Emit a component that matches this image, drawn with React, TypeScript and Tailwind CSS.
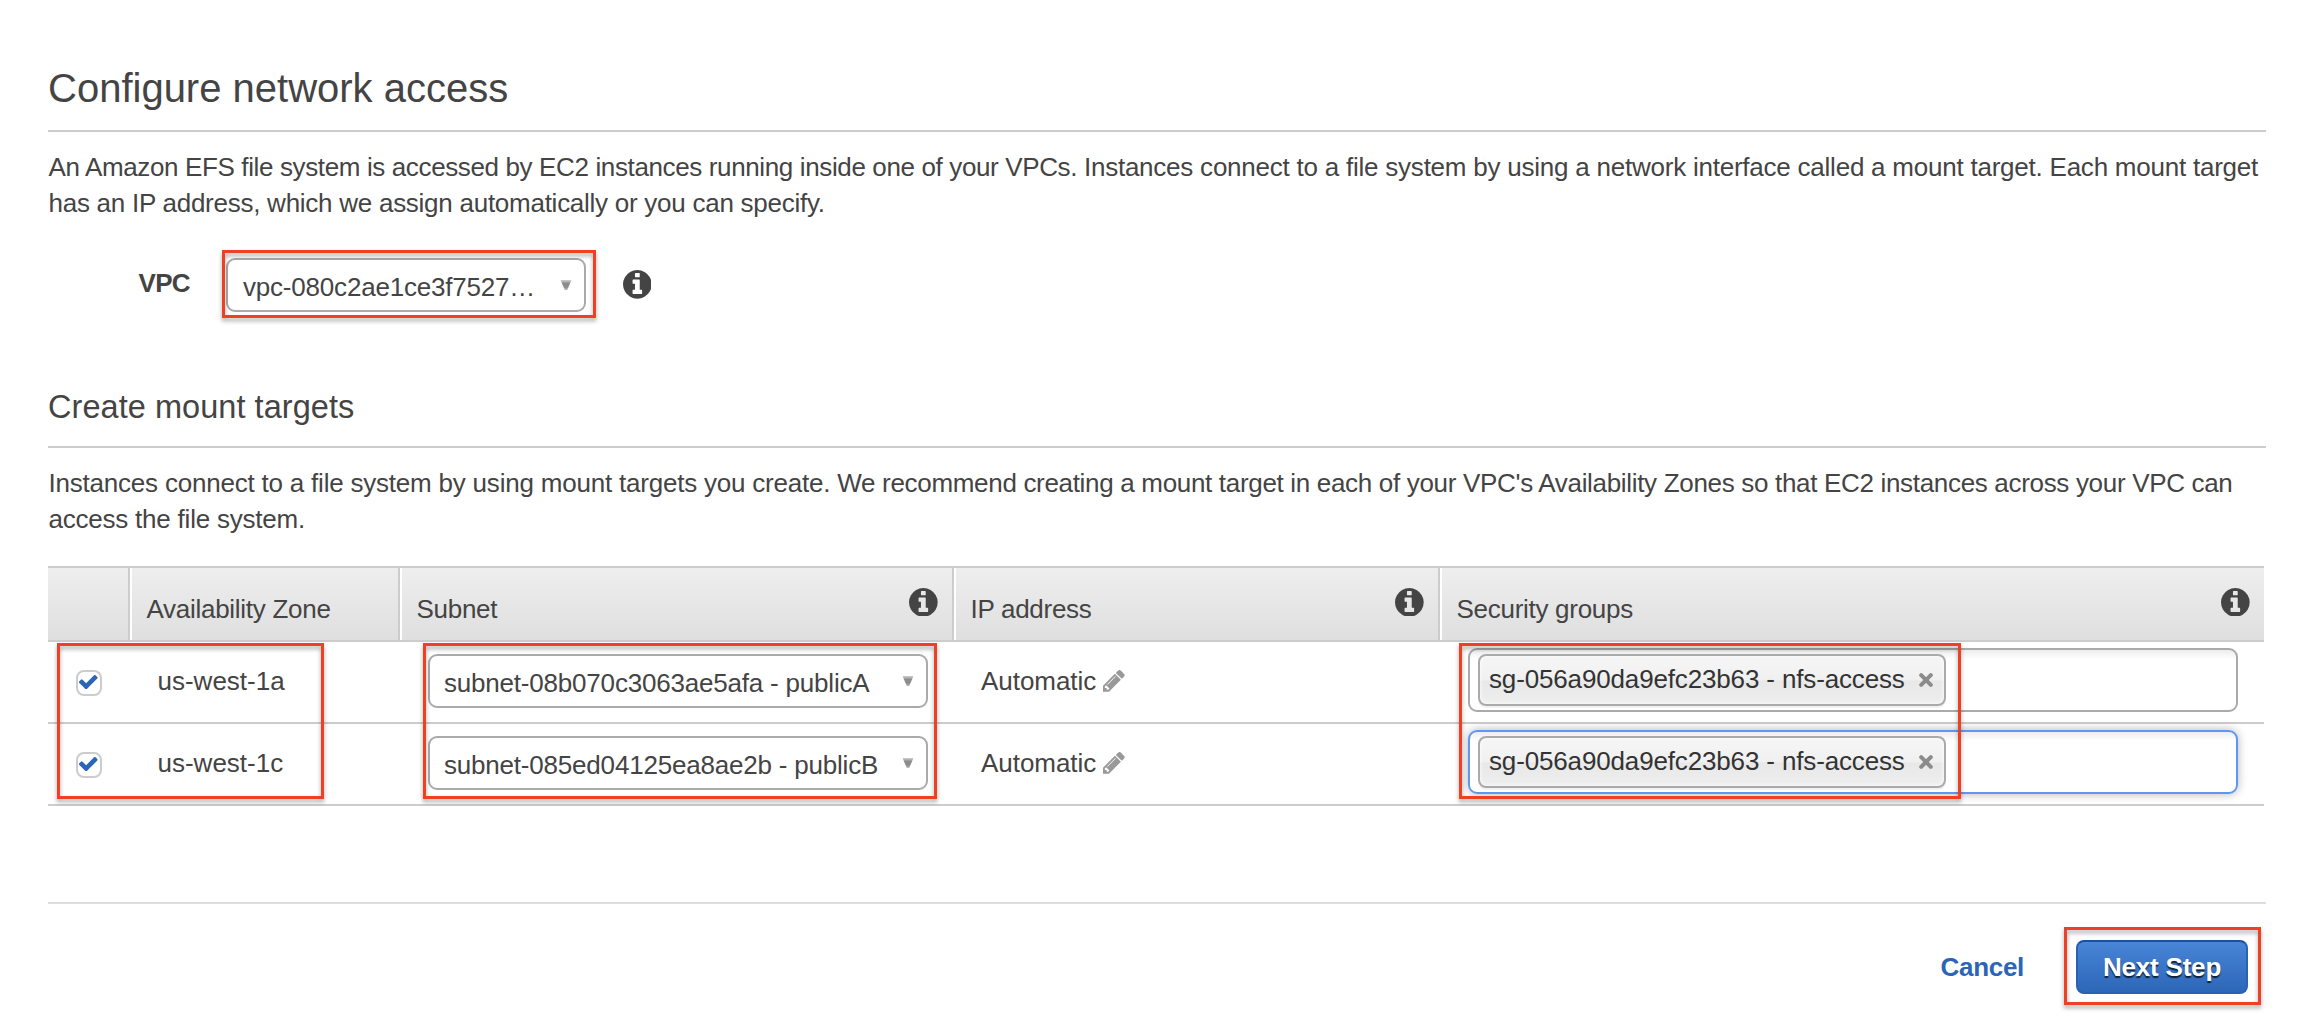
import type { ReactNode } from "react";

const rows = [
  { zone: "us-west-1a", subnet: "subnet-08b070c3063ae5afa - publicA", group: "sg-056a90da9efc23b63 - nfs-access", focused: false },
  { zone: "us-west-1c", subnet: "subnet-085ed04125ea8ae2b - publicB", group: "sg-056a90da9efc23b63 - nfs-access", focused: true },
];

function InfoIcon({ className = "" }: { className?: string }) {
  return (
    <svg viewBox="128 128 1536 1536" className={`size-[28.7px] shrink-0 fill-[#444] ${className}`}>
      <path d="M1152 1376v-160q0 -14 -9 -23t-23 -9h-96v-512q0 -14 -9 -23t-23 -9h-320q-14 0 -23 9t-9 23v160q0 14 9 23t23 9h96v320h-96q-14 0 -23 9t-9 23v160q0 14 9 23t23 9h448q14 0 23 -9t9 -23zM1024 480v-160q0 -14 -9 -23t-23 -9h-192q-14 0 -23 9t-9 23v160q0 14 9 23t23 9h192q14 0 23 -9t9 -23zM1664 896q0 209 -103 385.5t-279.5 279.5t-385.5 103t-385.5 -103t-279.5 -279.5t-103 -385.5t103 -385.5t279.5 -279.5t385.5 -103t385.5 103t279.5 279.5t103 385.5z" />
    </svg>
  );
}

function PencilIcon() {
  return (
    <svg viewBox="128 149 1515 1515" className="ml-[7px] mt-[7px] size-[21.7px] shrink-0 fill-[#999]">
      <path d="M491 1536l91-91-235-235-91 91v107h128v128h107zm523-928q0-22-22-22-10 0-17 7l-542 542q-7 7-7 17 0 22 22 22 10 0 17-7l542-542q7-7 7-17zm-54-192l416 416-832 832h-416v-416zm683 96q0 53-37 90l-166 166-416-416 166-165q36-38 90-38 53 0 91 38l235 234q37 39 37 91z" />
    </svg>
  );
}

function Checkbox() {
  return (
    <span className="ml-7 mt-7 flex size-[26px] rounded-[8px] border-2 border-[#ccc] bg-white pl-px pt-[3px]">
      <svg viewBox="121 334 1550 1188" className="h-[14.3px] w-[18.6px] fill-[#2b65b8]">
        <path d="M1671 566q0 40-28 68l-724 724-136 136q-28 28-68 28t-68-28l-136-136-362-362q-28-28-28-68t28-68l136-136q28-28 68-28t68 28l294 295 656-657q28-28 68-28t68 28l136 136q28 28 28 68z" />
      </svg>
    </span>
  );
}

function Select({ children, className = "" }: { children: ReactNode; className?: string }) {
  return (
    <div className={`flex h-[54px] justify-between rounded-[9px] border-2 border-[#aaa] bg-white pl-[14px] pr-3 pt-[9px] ${className}`}>
      <span className="whitespace-nowrap">{children}</span>
      <svg viewBox="0 0 12 10" className="mt-[11px] h-[10px] w-3 shrink-0">
        <defs>
          <linearGradient id="arrow" x1="0" y1="0" x2="0" y2="1">
            <stop offset="0" stopColor="#d0d0d0" />
            <stop offset="0.35" stopColor="#8c8c8c" />
            <stop offset="0.7" stopColor="#8c8c8c" />
            <stop offset="1" stopColor="#bbb" />
          </linearGradient>
        </defs>
        <path d="M.5 0h11L7.2 10H4.8z" fill="url(#arrow)" />
      </svg>
    </div>
  );
}

function Highlight({ className }: { className: string }) {
  return (
    <div className={`pointer-events-none absolute border-3 border-[#ee4023] drop-shadow-[0_3px_2px_rgba(0,0,0,0.35)] ${className}`} />
  );
}

function HeaderCell({ children, info = false, last = false }: { children?: ReactNode; info?: boolean; last?: boolean }) {
  return (
    <div className={`flex justify-between border-l-2 border-l-white bg-linear-to-b from-[#eee] to-[#dfdfdf] bg-origin-border pl-[14.5px] pr-[14px] ${last ? "" : "border-r-2 border-r-[#ccc]"}`}>
      <span className="pt-[23px] tracking-[-0.28px]">{children}</span>
      {info && <InfoIcon className="mt-[19.7px]" />}
    </div>
  );
}

function GroupInput({ group, focused }: { group: string; focused: boolean }) {
  return (
    <div
      className={`ml-7 mt-[6px] h-16 w-[770px] rounded-[9px] border-2 bg-linear-to-b from-[#eee] from-1% to-white to-15% pl-2 pt-1 ${
        focused ? "border-[#6196f0] shadow-[0_0_10px_rgba(0,0,0,0.3)]" : "border-[#aaa]"
      }`}
    >
      <div className="flex h-[52px] w-[468px] rounded-[8px] border-2 border-[#aaa] bg-[linear-gradient(#f4f4f4_20%,#f0f0f0_50%,#e8e8e8_52%,#eee_100%)] pl-[9px] pr-[11px] pt-[5px] text-[#333] shadow-[inset_0_0_4px_#fff,0_2px_0_rgba(0,0,0,0.05)]">
        <span className="whitespace-nowrap tracking-[-0.15px]">{group}</span>
        <svg viewBox="0 0 14 14" className="ml-auto mt-3 size-[14px] shrink-0 stroke-[#8b8b8b]">
          <path d="M2.2 2.2l9.6 9.6M11.8 2.2l-9.6 9.6" strokeWidth="4" strokeLinecap="round" fill="none" />
        </svg>
      </div>
    </div>
  );
}

export default function App() {
  return (
    <main className="h-[1028px] w-[2300px] overflow-hidden bg-white pl-12 pt-16 font-['Liberation_Sans',Arial,sans-serif] text-[26px] leading-9 text-[#444]">
      <div className="w-[2218px]">
        <h1 className="border-b-2 border-[#ccc] pb-[18px] text-[40px] leading-[48px]">Configure network access</h1>
        <p className="mt-[17px] whitespace-nowrap pl-[0.5px]">
          <span className="tracking-[-0.37px]">An Amazon EFS file system is accessed by EC2 instances running inside one of your VPCs. </span>
          <span className="tracking-[-0.23px]">
            Instances connect to a file system by using a network interface called a mount target. Each mount target
          </span>
          <br />
          <span className="tracking-[-0.26px]">has an IP address, which we assign automatically or you can specify.</span>
        </p>

        <div className="mt-[29px] flex h-[68px] items-start">
          <label className="ml-[90.5px] mt-[15px] w-[83.5px] font-bold tracking-[-0.7px]">VPC</label>
          <div className="relative h-[68px] w-[374px] pl-1 pt-2">
            <Select className="w-[360px] pl-[15px]! tracking-[-0.2px]">vpc-080c2ae1ce3f7527…</Select>
            <Highlight className="inset-0" />
          </div>
          <InfoIcon className="ml-[26.7px] mt-5" />
        </div>

        <h2 className="mt-[69px] border-b-2 border-[#ccc] pb-[19px] text-[32.5px] leading-10 tracking-[0.05px]">Create mount targets</h2>
        <p className="mt-[17px] whitespace-nowrap pl-[0.5px]">
          <span className="tracking-[-0.21px]">Instances connect to a file system by using mount targets you create. </span>
          <span className="tracking-[-0.32px]">
            We recommend creating a mount target in each of your VPC's Availability Zones so that EC2 instances across your VPC can
          </span>
          <br />
          <span className="tracking-[-0.22px]">access the file system.</span>
        </p>

        <section className="mt-[29px] w-[2216px]">
          <div className="grid h-[76px] grid-cols-[82px_270px_554px_486px_824px] border-y-2 border-[#ccc]">
            <div className="border-r-2 border-r-[#ccc] bg-linear-to-b from-[#eee] to-[#dfdfdf]" />
            <HeaderCell>Availability Zone</HeaderCell>
            <HeaderCell info>Subnet</HeaderCell>
            <HeaderCell info>IP address</HeaderCell>
            <HeaderCell info last>Security groups</HeaderCell>
          </div>
          <div className="relative">
            {rows.map((row) => (
              <div key={row.zone} className="grid h-[82px] grid-cols-[82px_270px_554px_486px_824px] border-b-2 border-[#ccc]">
                <div>
                  <Checkbox />
                </div>
                <div className="pl-[27.5px] pt-[21px]">{row.zone}</div>
                <div className="pl-7 pt-3">
                  <Select className="w-[500px] tracking-[-0.2px]">{row.subnet}</Select>
                </div>
                <div className="flex pl-[27px] pt-[21px]">
                  <span className="tracking-[-0.05px]">Automatic</span>
                  <PencilIcon />
                </div>
                <div>
                  <GroupInput group={row.group} focused={row.focused} />
                </div>
              </div>
            ))}
            <Highlight className="left-[9px] top-px h-[156px] w-[267px]" />
            <Highlight className="left-[375px] top-px h-[156px] w-[514px]" />
            <Highlight className="left-[1411px] top-px h-[156px] w-[502px]" />
          </div>
        </section>

        <footer className="mt-24 flex items-start justify-end border-t-2 border-[#ddd] pr-[5px] pt-[23px] font-bold">
          <a className="mr-10 mt-[22px] tracking-[-0.3px] text-[#2b65b8]">Cancel</a>
          <div className="relative h-[78px] w-[197px] pl-3 pt-[13px]">
            <button className="block h-[54px] w-[172px] rounded-[8px] border-2 border-[#2a62b3] border-t-[#1f4f9c] bg-linear-to-b from-[#4a86d9] to-[#2a65b6] bg-origin-border pb-[7px] pt-[7px] tracking-[-0.2px] text-white [text-shadow:0_2px_1px_rgba(0,0,0,0.7)]">
              Next Step
            </button>
            <Highlight className="inset-0" />
          </div>
        </footer>
      </div>
    </main>
  );
}
